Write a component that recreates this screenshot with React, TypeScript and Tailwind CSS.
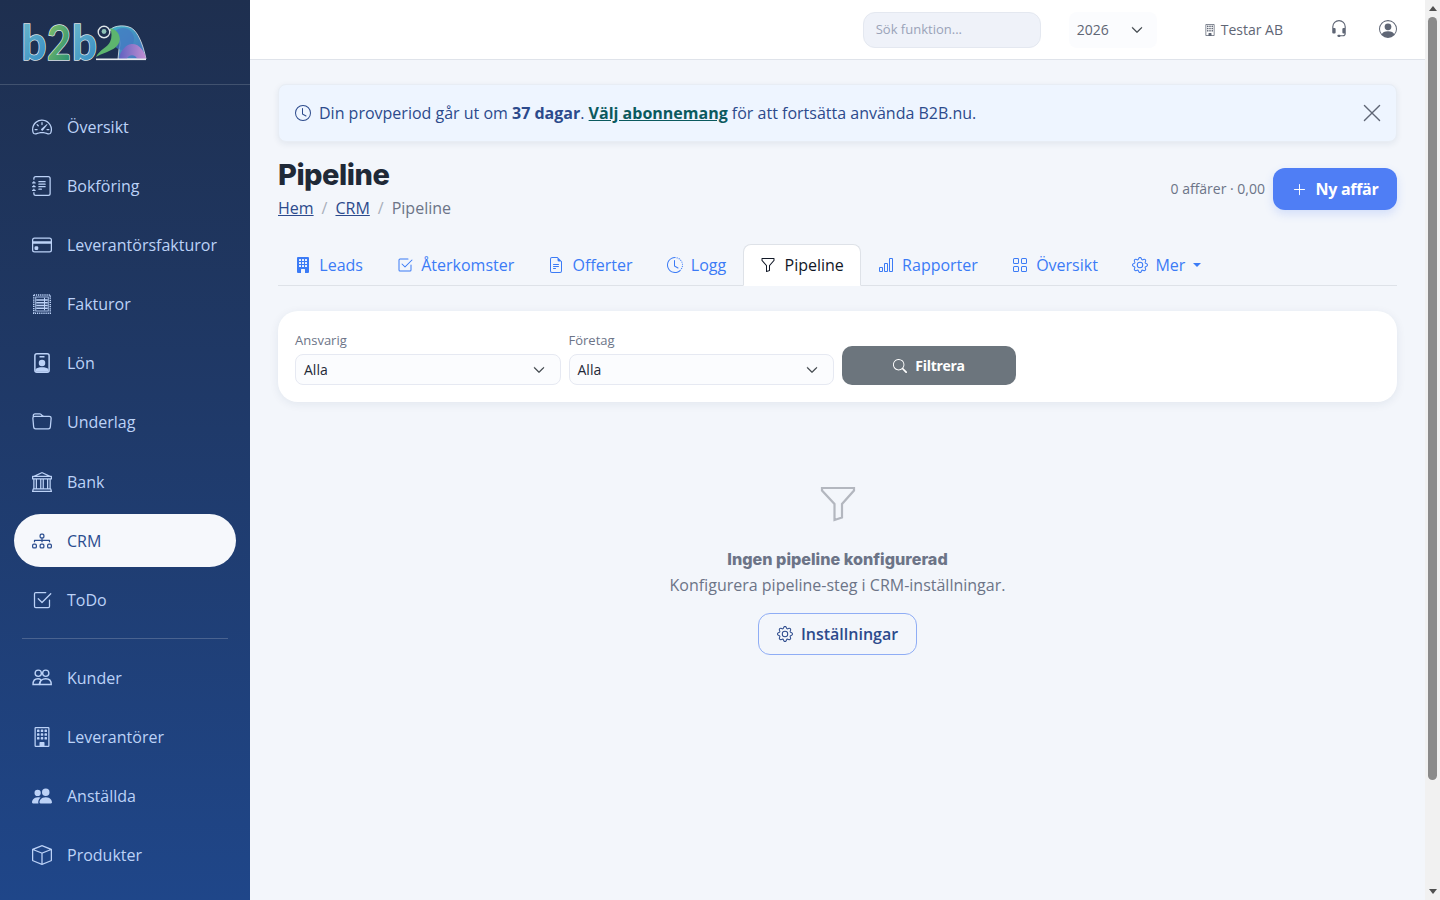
import {
  BsBank, BsBarChart, BsBox, BsBuilding, BsBuildingFill, BsCheck2Square, BsChevronDown, BsClock, BsClockHistory,
  BsCreditCard, BsDiagram3, BsFileEarmarkText, BsFolder, BsFunnel, BsGear, BsGrid, BsHeadset, BsJournalText,
  BsPeopleFill, BsPersonCircle, BsPlusLg, BsSearch, BsSpeedometer2, BsXLg,
} from 'react-icons/bs';

type IconProps = { className?: string };

// these have no close match in the icon set
function InvoiceIcon({ className }: IconProps) {
  return (
    <svg viewBox="0 0 16 16" fill="none" stroke="currentColor" className={className}>
      <rect x="1.4" y="0.7" width="13.2" height="14.6" strokeWidth="1.2" strokeDasharray="1 0.7" />
      <rect x="3" y="2.4" width="10" height="11.2" strokeWidth="0.7" />
      <path d="M3.4 4.8h9.2M3.4 7h9.2M3.4 9.2h9.2M3.4 11.4h9.2" strokeWidth="1.1" />
      <path d="M10 3v10" strokeWidth="0.8" />
    </svg>
  );
}

function BadgeIcon({ className }: IconProps) {
  return (
    <svg viewBox="0 0 16 16" className={className}>
      <rect x="2.3" y="0.6" width="11.4" height="14.8" rx="1.6" fill="none" stroke="currentColor" strokeWidth="1.2" />
      <rect x="6" y="2.4" width="4" height="1.2" fill="currentColor" />
      <circle cx="8" cy="8" r="2.6" fill="currentColor" />
      <path d="M2.8 15v-2c1-1.2 3-1.6 5.2-1.6s4.2.4 5.2 1.6v2z" fill="currentColor" />
    </svg>
  );
}

function CustomersIcon({ className }: IconProps) {
  return (
    <svg viewBox="0 0 16 16" fill="none" stroke="currentColor" strokeWidth="1.1" className={className}>
      <circle cx="5" cy="4.2" r="2.5" />
      <circle cx="11" cy="4.2" r="2.5" />
      <path d="M.8 13.2c0-2.8 1.6-4.6 4-4.6 1 0 1.8.3 2.4.9L5.6 13.2z" />
      <path d="M6.2 13.2c0-2.8 2-4.6 4.8-4.6s4.4 1.8 4.4 4.6z" />
    </svg>
  );
}

const NAV_TOP = [
  { label: 'Översikt', icon: BsSpeedometer2 },
  { label: 'Bokföring', icon: BsJournalText },
  { label: 'Leverantörsfakturor', icon: BsCreditCard },
  { label: 'Fakturor', icon: InvoiceIcon },
  { label: 'Lön', icon: BadgeIcon },
  { label: 'Underlag', icon: BsFolder },
  { label: 'Bank', icon: BsBank },
  { label: 'CRM', icon: BsDiagram3, active: true },
  { label: 'ToDo', icon: BsCheck2Square },
];

const NAV_BOTTOM = [
  { label: 'Kunder', icon: CustomersIcon },
  { label: 'Leverantörer', icon: BsBuilding },
  { label: 'Anställda', icon: BsPeopleFill },
  { label: 'Produkter', icon: BsBox },
];

const TABS = [
  { label: 'Leads', icon: BsBuildingFill },
  { label: 'Återkomster', icon: BsCheck2Square },
  { label: 'Offerter', icon: BsFileEarmarkText },
  { label: 'Logg', icon: BsClockHistory },
  { label: 'Pipeline', icon: BsFunnel, active: true },
  { label: 'Rapporter', icon: BsBarChart },
  { label: 'Översikt', icon: BsGrid },
];

function Logo() {
  return (
    <svg width="128" height="60" viewBox="0 0 128 60" className="block">
      <defs>
        <linearGradient id="lb" x1="0" y1="0" x2="0.6" y2="1">
          <stop offset="0" stopColor="#6fbccb" />
          <stop offset="1" stopColor="#3a8fc4" />
        </linearGradient>
        <linearGradient id="l2" x1="0" y1="0" x2="1" y2="1">
          <stop offset="0" stopColor="#8cc56a" />
          <stop offset="1" stopColor="#1f8a70" />
        </linearGradient>
        <linearGradient id="body" x1="0" y1="0" x2="1" y2="1">
          <stop offset="0" stopColor="#3fb2c4" />
          <stop offset="1" stopColor="#4a6fc0" />
        </linearGradient>
        <linearGradient id="legs" x1="0" y1="0" x2="1" y2="0">
          <stop offset="0" stopColor="#5f62c0" />
          <stop offset="1" stopColor="#c48fd2" />
        </linearGradient>
      </defs>
      <g fontFamily="Lato, sans-serif" fontWeight="700" fontSize="47" stroke="#dfe6ea" strokeWidth="1.5" paintOrder="stroke">
        <text x="1.5" y="49" fill="url(#lb)" textLength="25" lengthAdjust="spacingAndGlyphs">b</text>
        <text x="27" y="49" fill="url(#l2)" textLength="24" lengthAdjust="spacingAndGlyphs">2</text>
        <text x="52" y="49" fill="url(#lb)" textLength="25" lengthAdjust="spacingAndGlyphs">b</text>
      </g>
      <path d="M90 19C94 14 108 13 114 19C120 25 124 38 126 48H98L99 38C102 30 98 22 90 19Z" fill="url(#body)" stroke="#dfe6ea" strokeWidth="0.8" />
      <circle cx="103" cy="28" r="11" fill="#4478c2" opacity="0.75" />
      <path d="M90 17C100 19 103 30 96 36C90 41 82 42 76 46C80 38 87 37 90 31C92 27 92 21 90 17Z" fill="#5db56e" />
      <circle cx="84" cy="21" r="5.8" fill="#1e2f4f" stroke="#dfe6ea" strokeWidth="1.4" />
      <circle cx="84" cy="20.5" r="2.4" fill="#8fc2b8" />
      <path d="M99 48C100 39 107 33 112 33C120 33 125 41 126 48H117C116 43 108 43 107 48Z" fill="url(#legs)" />
      <rect x="76" y="47.5" width="50" height="1.6" fill="#e6ebee" />
    </svg>
  );
}

function NavItem({ label, icon: Icon, active }: { label: string; icon: React.ComponentType<IconProps>; active?: boolean }) {
  return (
    <a className={`flex h-[53px] items-center gap-[15px] rounded-full pl-[18px] text-base ${active ? 'bg-[#f6f8fc] text-[#2b4d8f]' : 'text-[#bcd2f7]'}`}>
      <Icon className="h-5 w-5 shrink-0" />
      {label}
    </a>
  );
}

function FilterSelect({ label }: { label: string }) {
  return (
    <div className="w-[265.5px]">
      <label className="mb-[5px] block text-[13px] leading-[18px] text-[#6c7487]">{label}</label>
      <div className="flex h-[31px] items-center justify-between rounded-lg border border-[#e6e9f2] bg-[#fbfcfe] pl-2 pr-[15px] text-sm text-[#1f2937]">
        Alla
        <BsChevronDown className="h-3 w-3 stroke-[0.8] text-[#343a40]" />
      </div>
    </div>
  );
}

function Scrollbar() {
  return (
    <div className="flex w-[15px] shrink-0 flex-col items-center bg-[#f1f1f1]">
      <div className="flex h-[17px] items-center justify-center">
        <span className="border-x-[4px] border-b-[5px] border-x-transparent border-b-[#505050]" />
      </div>
      <div className="h-[763px] w-[9px] rounded-full bg-[#8a8a8a]" />
      <div className="flex-1" />
      <div className="flex h-[17px] items-center justify-center">
        <span className="border-x-[4px] border-t-[5px] border-x-transparent border-t-[#505050]" />
      </div>
    </div>
  );
}

export default function App() {
  return (
    <div className="flex h-screen overflow-hidden bg-[#f3f6fb] font-['Open_Sans',sans-serif]">
      <aside className="w-[250px] shrink-0 overflow-hidden bg-gradient-to-b from-[#1e2f4f] to-[#1f4689]">
        <div className="flex h-[85px] items-center border-b border-[#41526f] pb-[3px] pl-[20px]">
          <Logo />
        </div>
        <nav className="px-[14px] pt-[15px]">
          <div className="flex flex-col gap-[6.18px]">
            {NAV_TOP.map(item => <NavItem key={item.label} {...item} />)}
          </div>
          <div className="mx-2 my-[12px] border-t border-[#4a6390]" />
          <div className="flex flex-col gap-[6px]">
            {NAV_BOTTOM.map(item => <NavItem key={item.label} {...item} />)}
          </div>
        </nav>
      </aside>

      <div className="min-w-0 flex-1 overflow-hidden">
        <header className="flex h-[60px] items-center border-b border-[#dfe3ea] bg-white">
          <div className="ml-auto flex items-center">
            <div className="flex h-9 w-[178px] items-center rounded-xl border border-[#e4e8f0] bg-[#eff2f9] px-3 pt-px text-[13px] text-[#9aa3b8]">Sök funktion...</div>
            <div className="ml-7 flex h-9 w-[88px] items-center justify-between rounded-lg bg-[#fbfcfe] pl-2 pr-[14px] text-sm text-[#5f6675]">
              2026
              <BsChevronDown className="h-3 w-3 stroke-[0.8] text-[#343a40]" />
            </div>
            <div className="ml-[47px] flex items-center gap-[5px] text-sm text-[#5f6675]">
              <BsBuilding className="h-[14px] w-[12px]" />
              Testar AB
            </div>
            <BsHeadset className="-mt-0.5 ml-[47px] h-[18px] w-[18px] text-[#5f6675]" />
            <BsPersonCircle className="-mt-0.5 ml-[31px] mr-[28px] h-[18px] w-[18px] text-[#5f6675]" />
          </div>
        </header>

        <main className="px-7 pt-6">
          <div className="flex h-[58px] items-center justify-between rounded-lg border border-[#e8edf4] bg-[#eef5ff] pl-4 pr-[13px] text-base text-[#2c4a8c] shadow-[0_2px_6px_rgba(30,50,90,0.08)]">
            <p className="flex items-center">
              <BsClock className="mr-2 h-4 w-4" />
              <span>
                Din provperiod går ut om <strong className="font-bold">37 dagar</strong>.{' '}
                <a className="font-bold text-[#0b5a5e] underline">Välj abonnemang</a> för att fortsätta använda B2B.nu.
              </span>
            </p>
            <BsXLg className="h-[22px] w-[22px] text-[#5f6675]" />
          </div>

          <div className="mt-[14px] flex items-start justify-between">
            <div>
              <h1 className="font-['Inter',sans-serif] text-[29px] font-extrabold leading-[38px] tracking-[-0.5px] text-[#1f2937]">Pipeline</h1>
              <div className="mt-[2px] flex items-center text-base leading-6 text-[#6c7487]">
                <a className="text-[#2c4a8c] underline">Hem</a>
                <span className="mx-2 text-[#a9afba]">/</span>
                <a className="text-[#2c4a8c] underline">CRM</a>
                <span className="mx-2 text-[#a9afba]">/</span>
                Pipeline
              </div>
            </div>
            <div className="mt-[12px] flex items-center gap-2">
              <span className="text-sm text-[#6c7487]">0 affärer · 0,00</span>
              <button className="flex h-[42px] w-[124px] items-center justify-center gap-[9px] rounded-xl bg-[#4f7ef5] text-base font-bold tracking-[-0.3px] text-white shadow-[0_4px_10px_rgba(79,126,245,0.2)]">
                <BsPlusLg className="h-[15px] w-[15px]" />
                Ny affär
              </button>
            </div>
          </div>

          <div className="mt-[24px] flex h-[42px] items-stretch border-b border-[#dee2e8] text-base text-[#3b7bf6]">
            {TABS.map(({ label, icon: Icon, active }) => (
              <a
                key={label}
                className={`-mb-px flex items-center gap-[8.3px] rounded-t-lg border px-4 ${active ? 'border-[#dee2e8] border-b-white bg-white text-[#111827]' : 'border-transparent'}`}
              >
                <Icon className="h-4 w-4" />
                {label}
              </a>
            ))}
            <a className="flex items-center gap-[7.5px] border border-transparent px-4">
              <BsGear className="h-4 w-4" />
              Mer
              <span className="border-x-[4px] border-t-[4px] border-x-transparent border-t-current" />
            </a>
          </div>

          <div className="mt-[25px] flex h-[91px] items-end gap-2 rounded-[20px] bg-white px-[17px] pb-[17px] shadow-[0_2px_10px_rgba(30,50,90,0.08)]">
            <FilterSelect label="Ansvarig" />
            <FilterSelect label="Företag" />
            <button className="flex h-[39px] w-[174px] items-center justify-center gap-2 rounded-[10px] bg-[#6c757d] text-sm font-bold tracking-[-0.3px] text-white">
              <BsSearch className="h-[14px] w-[14px]" />
              Filtrera
            </button>
          </div>

          <div className="mt-[84px] flex flex-col items-center">
            <svg width="36" height="36" viewBox="0 0 36 36" fill="none" stroke="#b3b7bf" strokeWidth="2.2">
              <path d="M2 2H34V4.5L22 18V31.5L14.5 34V18L2 4.5Z" />
            </svg>
            <h2 className="mt-[25px] font-['Inter',sans-serif] text-[16.2px] font-extrabold leading-6 text-[#6c7487]">Ingen pipeline konfigurerad</h2>
            <p className="mt-[2px] text-base leading-6 text-[#6c7487]">Konfigurera pipeline-steg i CRM-inställningar.</p>
            <button className="mt-4 flex h-[42px] w-[159px] items-center justify-center gap-2 rounded-xl border border-[#8fadf5] text-base font-semibold text-[#2c4a8c]">
              <BsGear className="h-4 w-4" />
              Inställningar
            </button>
          </div>
        </main>
      </div>

      <Scrollbar />
    </div>
  );
}
